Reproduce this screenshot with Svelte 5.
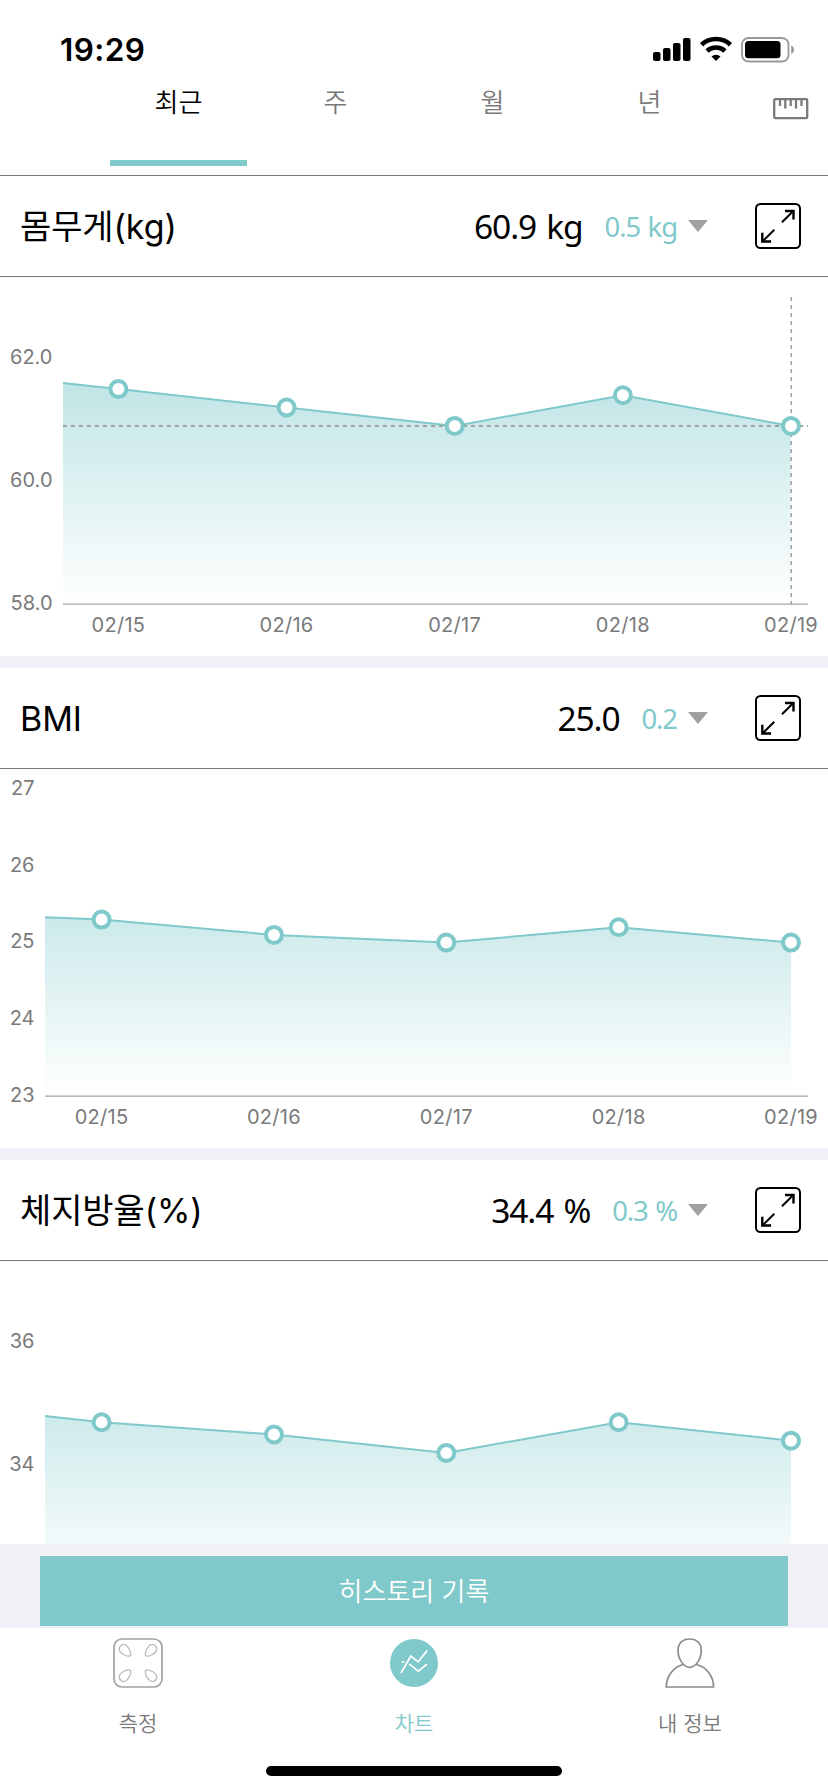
<script lang="ts">
  type Chart = {
    title: string;
    value: string;
    delta: string;
    min: number;
    unit: number; // pixels per 1.0 on the y axis
    ticks: string[];
    left: number;
    start: number;
    first: number;
    data: number[];
    height: number; // visible part of the plot
    guide?: boolean;
  };

  const days = ['02/15', '02/16', '02/17', '02/18', '02/19'];
  const base = 327;
  const last = 791;

  const charts: Chart[] = [
    { title: '몸무게(kg)', value: '60.9 kg', delta: '0.5 kg', min: 58, unit: 61.4, ticks: ['62.0', '60.0', '58.0'], left: 63, start: 61.6, first: 118.4, data: [61.5, 61.2, 60.9, 61.4, 60.9], height: 379, guide: true },
    { title: 'BMI', value: '25.0', delta: '0.2', min: 23, unit: 76.7, ticks: ['27', '26', '25', '24', '23'], left: 45, start: 25.33, first: 101.6, data: [25.3, 25.1, 25.0, 25.2, 25.0], height: 379 },
    { title: '체지방율(%)', value: '34.4 %', delta: '0.3 %', min: 32, unit: 61.4, ticks: ['36', '34'], left: 45, start: 34.8, first: 101.6, data: [34.7, 34.5, 34.2, 34.7, 34.4], height: 283 }
  ];

  const tabs = ['최근', '주', '월', '년'];
  let active = $state(0);

  const x = (c: Chart, i: number) => c.first + (i * (last - c.first)) / 4;
  const y = (c: Chart, v: number) => base - (v - c.min) * c.unit;
  const line = (c: Chart) =>
    [`${c.left},${y(c, c.start)}`, ...c.data.map((v, i) => `${x(c, i)},${y(c, v)}`)].join(' ');
</script>

<div class="screen">
  <div class="status">
    <span class="time">19:29</span>
    <svg width="144" height="28" viewBox="0 0 144 28">
      <rect x="2" y="16" width="7.5" height="9" rx="2" />
      <rect x="12" y="12" width="7.5" height="13" rx="2" />
      <rect x="22" y="7" width="7.5" height="18" rx="2" />
      <rect x="32" y="2" width="7.5" height="23" rx="2" />
      <g fill="none" stroke="#000" stroke-width="4.6">
        <path d="M50.5 8.7a21.5 21.5 0 0 1 29 0" />
        <path d="M56 15a13.2 13.2 0 0 1 18 0" />
      </g>
      <path d="M65 25l-4.5-4.4a6.6 6.6 0 0 1 9 0z" />
      <rect x="91" y="2" width="46.5" height="23.5" rx="6.5" fill="none" stroke="#999" stroke-width="1.8" />
      <rect x="94" y="5" width="35.5" height="17.3" rx="3.5" />
      <path d="M140.2 9.5a4.6 4.6 0 0 1 0 8.5z" fill="#999" />
    </svg>
  </div>

  <nav class="tabs">
    {#each tabs as tab, i}
      <button class="tab" class:active={active === i} onclick={() => (active = i)}>{tab}</button>
    {/each}
    <svg class="ruler" width="36" height="22" viewBox="0 0 36 22" fill="none" stroke="#7a7a7a" stroke-width="2.3">
      <rect x="1.2" y="1.2" width="33" height="19" rx="1.2" />
      <path d="M7 2v6M12.3 2v8.5M17.7 2v6M23 2v8.5M28.5 2v6" />
    </svg>
  </nav>

  <main>
    {#each charts as c, n}
      <section class="card">
        <header>
          <h2>{c.title}</h2>
          <span class="value">{c.value}</span>
          <span class="delta">{c.delta}</span>
          <svg class="arrow" width="20" height="12" viewBox="0 0 20 12"><path d="M0 0h20L10 12z" fill="#a0a0a0" /></svg>
          <svg width="46" height="46" viewBox="0 0 46 46" fill="none" stroke="#000" stroke-width="2">
            <rect x="1" y="1" width="44" height="44" rx="4.5" />
            <path d="M27 19.3L38.3 8M7.7 38.2L19.3 26.7" />
            <path d="M30 8h8.5v8.5M7.3 29.8v8.7h8.8" stroke-width="2.4" />
          </svg>
        </header>
        <svg class="chart" width="828" height={c.height} viewBox="0 0 828 {c.height}">
          <defs>
            <linearGradient id="fill{n}" gradientUnits="userSpaceOnUse" x1="0" y1="20" x2="0" y2={base}>
              <stop offset="0" stop-color="#7fc9cb" stop-opacity="0.68" />
              <stop offset="1" stop-color="#7fc9cb" stop-opacity="0" />
            </linearGradient>
          </defs>
          <path class="axis" d="M{c.left} {base + 0.2}H808" />
          <polygon points="{line(c)} {last},{base} {c.left},{base}" fill="url(#fill{n})" />
          <polyline class="line" points={line(c)} />
          {#if c.guide}
            <path class="guide" d="M{c.left} {y(c, c.data[4])}H808" />
            <path class="guide thin" d="M{last + 0.3} 20V{base}" />
          {/if}
          {#each c.data as v, i}
            <circle cx={x(c, i)} cy={y(c, v)} r="8" />
            {#if c.height > base}
              <text class="day" x={x(c, i)} y="355.3">{days[i]}</text>
            {/if}
          {/each}
          {#each c.ticks as t}
            <text class="tick" x={c.left - 10.5} y={y(c, Number(t)) + 5.6}>{t}</text>
          {/each}
        </svg>
      </section>
    {/each}
  </main>

  <div class="history">
    <button>히스토리 기록</button>
  </div>

  <footer>
    <div class="item">
      <svg width="50" height="50" viewBox="0 0 50 50" fill="none" stroke="#a3a3a3" stroke-width="1.7">
        <rect x="1" y="1" width="48" height="48" rx="8" />
        <g stroke="#bbb" stroke-width="1.3">
          <path id="pad" d="M17.5 17.6C14 19.5 6 15 6.3 10.7C6.6 6.5 11.6 5 14.3 8.3C16 10.4 18.8 15.5 17.5 17.6z" />
          <use href="#pad" transform="matrix(-1 0 0 1 50 0)" />
          <use href="#pad" transform="matrix(1 0 0 -1 0 50)" />
          <use href="#pad" transform="matrix(-1 0 0 -1 50 50)" />
        </g>
      </svg>
      <span>측정</span>
    </div>
    <div class="item current">
      <svg width="50" height="50" viewBox="0 0 50 50" fill="none" stroke="#fff" stroke-width="1.7">
        <circle cx="25" cy="25" r="24" fill="#7fc9cb" stroke="none" />
        <path d="M12 35L21.8 18L29.2 23.8L38.2 12.5M12.5 24h3.2M20 25.8L29.3 33.2L38 26" />
      </svg>
      <span>차트</span>
    </div>
    <div class="item">
      <svg width="50" height="50" viewBox="0 0 50 50" fill="none" stroke="#8b8b8b" stroke-width="1.7">
        <path d="M24.7 1C17.5 1 13 5.7 13 12.3C13 20.5 18.3 29.3 24.7 29.3S36.3 20.5 36.3 12.3C36.3 5.7 31.9 1 24.7 1z" />
        <path d="M18.3 26.5C8 29 1.4 38.5 1.2 49H48.6C48.4 38.5 42 29 31.2 26.5" />
      </svg>
      <span>내 정보</span>
    </div>
  </footer>
  <div class="home"></div>
</div>

<style>
  :global(body) {
    background: #fff;
  }

  .screen {
    display: flex;
    flex-direction: column;
    width: 828px;
    height: 1792px;
    overflow: hidden;
    background: #fff;
    color: #000;
    font-family: Inter, 'Noto Sans CJK KR', sans-serif;
  }

  svg {
    display: block;
    flex: none;
  }

  button {
    border: 0;
    padding: 0;
    font-family: inherit;
    cursor: pointer;
  }

  .status {
    display: flex;
    justify-content: space-between;
    align-items: flex-start;
    height: 80px;
    padding: 36px 33px 0 60px;
    box-sizing: border-box;
  }

  .time {
    font-size: 31.5px;
    font-weight: 600;
    line-height: 28px;
    letter-spacing: 0.4px;
  }

  .tabs {
    display: flex;
    height: 95px;
    padding-left: 100px;
    border-bottom: 1px solid #777;
  }

  .tab {
    width: 137px;
    height: 86px;
    margin: 0 10px;
    padding-bottom: 35px;
    box-sizing: border-box;
    border-bottom: 6px solid transparent;
    background: none;
    color: #7a7a7a;
    font-size: 26px;
    font-weight: 350;
    line-height: 43px;
  }

  .tab.active {
    color: #000;
    border-bottom-color: #7fc9cb;
  }

  .ruler {
    margin: 18px 0 0 45px;
  }

  main {
    height: 1368px;
    overflow: hidden;
  }

  .card {
    border-bottom: 12px solid #f1f0f6;
  }

  .card:last-child {
    border-bottom: 0;
  }

  header {
    display: flex;
    align-items: center;
    height: 100px;
    padding: 0 27px 0 20px;
    border-bottom: 1px solid #777;
  }

  h2 {
    flex: 1;
    margin: 0;
    padding-top: 2px;
    font-size: 34px;
    font-weight: 400;
    line-height: 50px;
    letter-spacing: -0.1px;
  }

  .value,
  .delta {
    font-family: 'Noto Sans', sans-serif;
    white-space: nowrap;
  }

  .value {
    font-size: 33.5px;
    letter-spacing: -1.1px;
    word-spacing: 2.5px;
    margin-right: 22px;
  }

  .delta {
    color: #7fc9cb;
    font-size: 27.5px;
    letter-spacing: -1.1px;
    word-spacing: 1.5px;
  }

  .arrow {
    margin: 0 47px 0 11px;
  }

  .axis {
    stroke: #a5a5a5;
    stroke-width: 1.3;
  }

  .line {
    fill: none;
    stroke: #7fc9cb;
    stroke-width: 2;
  }

  .guide {
    stroke: #a0a0a0;
    stroke-width: 2;
    stroke-dasharray: 4 4;
  }

  .thin {
    stroke-width: 1.6;
  }

  .chart circle {
    fill: #fff;
    stroke: #7fc9cb;
    stroke-width: 4;
  }

  text {
    fill: #7a7a7a;
    font-size: 20px;
    letter-spacing: 0.3px;
  }

  .day {
    text-anchor: middle;
  }

  .tick {
    text-anchor: end;
    letter-spacing: 0;
  }

  .history {
    height: 84px;
    padding: 12px 40px 2px;
    box-sizing: border-box;
    background: #f1f0f6;
  }

  .history button {
    width: 100%;
    height: 70px;
    padding-bottom: 4px;
    background: #7fc9cb;
    color: #fff;
    font-size: 26px;
    font-weight: 350;
  }

  footer {
    display: flex;
    justify-content: space-between;
    height: 138px;
  }

  .item {
    display: flex;
    flex-direction: column;
    align-items: center;
    width: 276px;
    padding-top: 10px;
    color: #7a7a7a;
    font-size: 21px;
    font-weight: 350;
  }

  .item span {
    margin-top: 21px;
    line-height: 30px;
  }

  .item.current {
    color: #7fc9cb;
  }

  .home {
    width: 296px;
    height: 10px;
    margin: 0 auto;
    border-radius: 5px;
    background: #000;
  }
</style>
